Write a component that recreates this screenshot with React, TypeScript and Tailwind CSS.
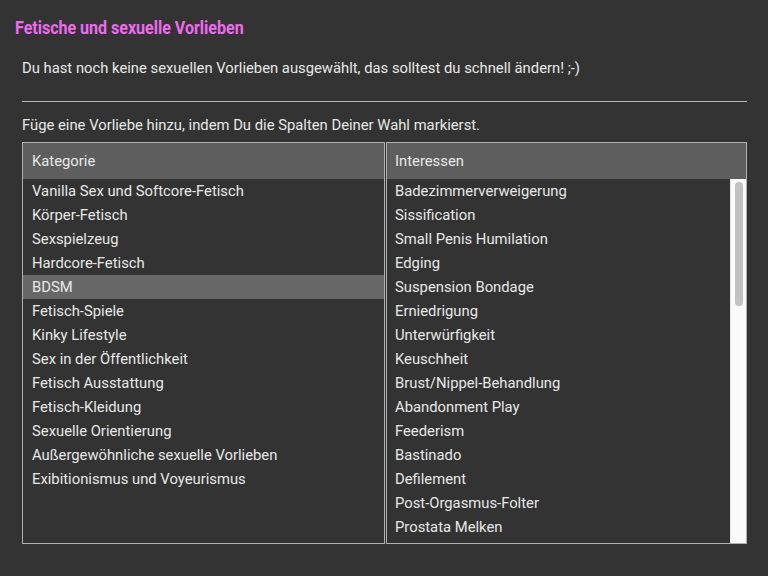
import React from "react";

const categories = [
  "Vanilla Sex und Softcore-Fetisch",
  "Körper-Fetisch",
  "Sexspielzeug",
  "Hardcore-Fetisch",
  "BDSM",
  "Fetisch-Spiele",
  "Kinky Lifestyle",
  "Sex in der Öffentlichkeit",
  "Fetisch Ausstattung",
  "Fetisch-Kleidung",
  "Sexuelle Orientierung",
  "Außergewöhnliche sexuelle Vorlieben",
  "Exibitionismus und Voyeurismus",
];

const interests = [
  "Badezimmerverweigerung",
  "Sissification",
  "Small Penis Humilation",
  "Edging",
  "Suspension Bondage",
  "Erniedrigung",
  "Unterwürfigkeit",
  "Keuschheit",
  "Brust/Nippel-Behandlung",
  "Abandonment Play",
  "Feederism",
  "Bastinado",
  "Defilement",
  "Post-Orgasmus-Folter",
  "Prostata Melken",
];

const App: React.FC = () => {
  const selected = "BDSM";

  return (
    <div className="min-h-[576px] w-[768px] bg-[#333333] text-[#e8e8e8] font-['Roboto',sans-serif] overflow-hidden">
      <div className="px-[15px] pt-[17px]">
        <h1 className="text-[18px] leading-[22px] font-bold text-[#ee6bf0] scale-x-[0.89] origin-left whitespace-nowrap">
          Fetische und sexuelle Vorlieben
        </h1>
      </div>
      <div className="px-[22px] text-[14.8px]">
        <p className="mt-[19px] leading-[20px]">
          Du hast noch keine sexuellen Vorlieben ausgewählt, das solltest du schnell ändern! ;-)
        </p>
        <hr className="mt-[23px] border-0 border-t border-[#b5b5b5] w-[725px]" />
        <p className="mt-[13px] leading-[20px]">
          Füge eine Vorliebe hinzu, indem Du die Spalten Deiner Wahl markierst.
        </p>

        <div className="mt-[7px] flex gap-px w-[725px]">
          <div className="w-[363px] h-[402px] border border-[#b0b0b0] flex flex-col">
            <div className="h-[36px] shrink-0 bg-[#5e5e5e] px-[9px] flex items-center">
              Kategorie
            </div>
            <ul className="flex-1">
              {categories.map((c) => (
                <li
                  key={c}
                  className={
                    "h-[24px] px-[9px] flex items-center " +
                    (c === selected ? "bg-[#676767]" : "")
                  }
                >
                  {c}
                </li>
              ))}
            </ul>
          </div>

          <div className="w-[361px] h-[402px] border border-[#b0b0b0] flex flex-col">
            <div className="h-[36px] shrink-0 bg-[#5e5e5e] px-[8px] flex items-center">
              Interessen
            </div>
            <div className="flex flex-1 min-h-0">
              <ul className="flex-1 overflow-hidden">
                {interests.map((i) => (
                  <li key={i} className="h-[24px] px-[8px] flex items-center">
                    {i}
                  </li>
                ))}
              </ul>
              <div className="w-[16px] shrink-0 bg-[#fafafa] border-l border-[#e6e6e6] pt-[3px] flex justify-center">
                <div className="w-[8px] h-[124px] rounded-full bg-[#c1c1c1]" />
              </div>
            </div>
          </div>
        </div>
      </div>
    </div>
  );
};

export default App;
